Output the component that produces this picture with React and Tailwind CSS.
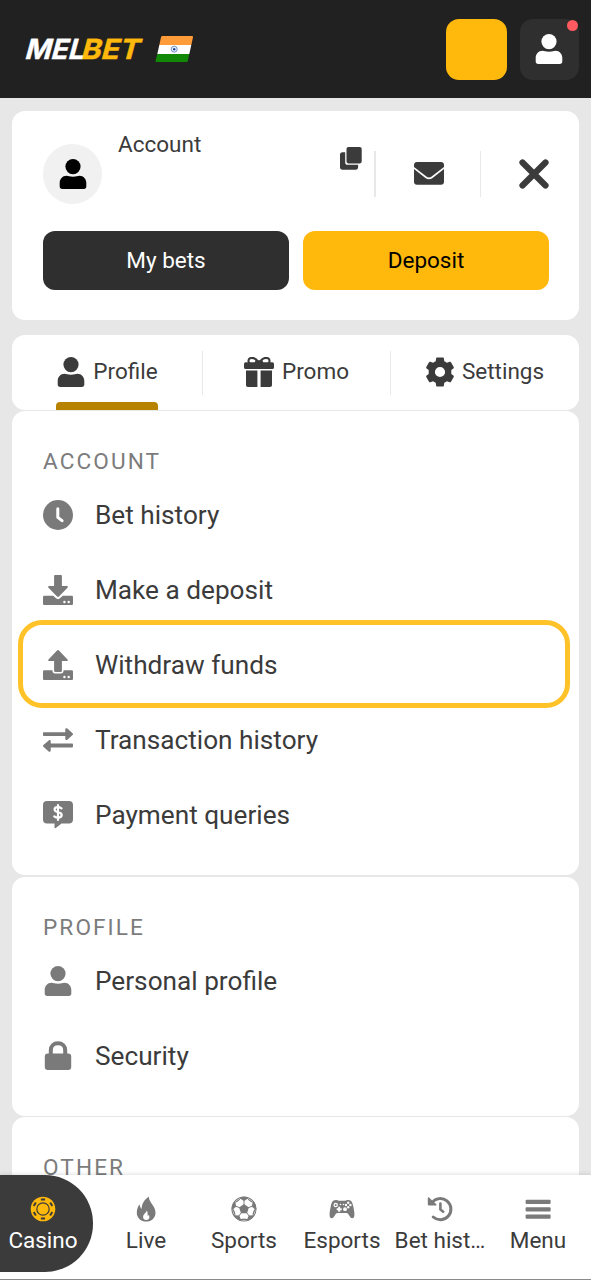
import React from "react";

function Svg({ w, h, className = "", children }) {
  return (
    <svg width={w} height={h} viewBox={`0 0 ${w} ${h}`} fill="currentColor" className={`shrink-0 ${className}`} aria-hidden="true">
      {children}
    </svg>
  );
}

const UserIcon = ({ className }) => (
  <Svg w={30} h={30} className={className}>
    <circle cx="15" cy="7.6" r="7.6" />
    <path d="M8.6 16.7c1.7 0 2.9 1 6.4 1s4.700-1 6.400-1c4.200 0 6.900 3.300 6.900 7.300v3.500c0 1.600-.9 2.500-2.500 2.500H4.200c-1.600 0-2.500-.9-2.500-2.500V24c0-4 2.700-7.300 6.900-7.300z" />
  </Svg>
);

const CopyIcon = () => (
  <Svg w={22} h={23}>
    <path d="M8.600 0h11c1.300 0 2.100.8 2.100 2.100v12.200c0 1.300-.8 2.100-2.100 2.100h-11c-1.300 0-2.100-.8-2.100-2.100V2.100C6.500.8 7.300 0 8.600 0z" />
    <path d="M5.200 5.200v10.300c0 1.400.9 2.300 2.300 2.300h10.600v2.400c0 1.600-.9 2.500-2.500 2.500H2.500c-1.600 0-2.500-.9-2.500-2.500V7.700c0-1.600.9-2.500 2.500-2.500z" />
  </Svg>
);

const MailIcon = () => (
  <Svg w={30} h={23}>
    <path d="M3 0h24c1.900 0 3 1.100 3 3v2L17.600 14.600c-1.700 1.300-3.500 1.300-5.200 0L0 5V3c0-1.900 1.100-3 3-3z" />
    <path d="M0 7l11.400 8.900c2.300 1.700 4.900 1.700 7.200 0L30 7v12.800c0 1.900-1.100 3-3 3H3c-1.900 0-3-1.100-3-3z" />
  </Svg>
);

const CloseIcon = () => (
  <Svg w={30} h={30}>
    <path d="M3.500 3.500l23 23M26.500 3.500l-23 23" stroke="currentColor" strokeWidth="6.200" strokeLinecap="round" />
  </Svg>
);

const GiftIcon = () => (
  <Svg w={30} h={30}>
    <path d="M15 5.800C12 1.500 8.500.2 6 1.300 4 2.200 4.200 4.500 5.300 6.300M15 5.800C18 1.500 21.500.2 24 1.300c2 .9 1.800 3.200.7 5" fill="none" stroke="currentColor" strokeWidth="2.100" />
    <path d="M11.500 3.200h7l1 3h-9z" />
    <rect x="0" y="5.200" width="30" height="6.800" rx="1.600" />
    <path d="M2 13.500h11.400V30H4c-1.300 0-2-.7-2-2zM16.600 13.500H28V28c0 1.300-.7 2-2 2h-9.400z" />
  </Svg>
);

const GearIcon = () => (
  <Svg w={28} h={30}>
    <path
      fillRule="evenodd"
      d="M11.200.5h5.600c.7 0 1 .4 1.100 1l.4 2.700 2.700 1.600 2.600-1c.6-.2 1.100 0 1.400.5l2.700 4.700c.3.600.2 1-.3 1.400l-2.100 1.700v3.800l2.100 1.700c.5.400.6.800.3 1.400L25 24.700c-.3.500-.8.700-1.400.5l-2.600-1-2.700 1.600-.4 2.700c-.1.600-.4 1-1.100 1h-5.600c-.7 0-1-.4-1.100-1l-.4-2.700L7 24.200l-2.600 1c-.6.2-1.100 0-1.400-.5L.3 20c-.3-.6-.2-1 .3-1.400l2.100-1.700v-3.800L.6 11.400C.1 11 0 10.600.3 10L3 5.300c.3-.5.8-.7 1.400-.5l2.600 1 2.700-1.600.4-2.700c.1-.6.4-1 1.100-1zM14 9.900a5.100 5.100 0 1 0 0 10.200 5.100 5.100 0 0 0 0-10.200z"
    />
  </Svg>
);

const ClockIcon = () => (
  <Svg w={30} h={30}>
    <circle cx="15" cy="15" r="15" />
    <path d="M14.800 8.800v8.500l4.200 3.400" fill="none" stroke="white" strokeWidth="3" strokeLinecap="round" strokeLinejoin="round" />
  </Svg>
);

const DepositIcon = () => (
  <Svg w={30} h={30}>
    <path d="M12.300 0h5.400c.8 0 1.200.4 1.200 1.200v9.900h5c1.100 0 1.400.8.600 1.600l-8.300 8.600c-.9.900-1.500.9-2.400 0l-8.300-8.600c-.8-.8-.5-1.600.6-1.600h5V1.200c0-.8.400-1.200 1.200-1.200z" />
    <path d="M1.500 20.800h8.700l2.800 2.500c1.300 1.100 2.700 1.100 4 0l2.800-2.500h8.700c1 0 1.500.5 1.500 1.500v6.200c0 1-.5 1.500-1.500 1.500h-27c-1 0-1.500-.5-1.500-1.500v-6.200c0-1 .5-1.500 1.500-1.500z" />
    <circle cx="21.400" cy="27" r="1.200" fill="white" />
    <circle cx="25.700" cy="27" r="1.200" fill="white" />
  </Svg>
);

const WithdrawIcon = () => (
  <Svg w={30} h={30}>
    <path d="M13.800.7c.9-.9 1.500-.9 2.400 0l8.300 8.700c.8.800.5 1.600-.6 1.600h-5v9.700c0 .8-.4 1.200-1.200 1.200h-5.400c-.8 0-1.200-.4-1.200-1.200V11h-5c-1.100 0-1.400-.8-.6-1.600z" />
    <path d="M1.500 20.300h8v.8c0 1.500 1 2.500 2.500 2.500h6c1.500 0 2.500-1 2.500-2.500v-.8h8c1 0 1.500.5 1.500 1.500v6.700c0 1-.5 1.500-1.500 1.500h-27c-1 0-1.500-.5-1.500-1.500v-6.700c0-1 .5-1.500 1.500-1.500z" />
    <circle cx="21.400" cy="27" r="1.200" fill="white" />
    <circle cx="25.700" cy="27" r="1.200" fill="white" />
  </Svg>
);

const SwapIcon = () => (
  <Svg w={30} h={24}>
    <path d="M.8 4.200h21.500V1.500c0-1.300 1.100-1.700 2-.9l5 4.400c.9.800.9 1.500 0 2.300l-5 4.400c-.9.800-2 .3-2-1V8H.8c-.5 0-.8-.3-.8-.8V5c0-.5.300-.8.800-.8z" />
    <path d="M29.200 15.600h-21.500v-2.300c0-1.300-1.100-1.700-2-.9l-5 4.400c-.9.800-.9 1.500 0 2.300l5 4.300c.9.800 2 .4 2-.9v-3.100h21.500c.5 0 .8-.3.800-.8v-2.200c0-.5-.3-.8-.8-.8z" />
  </Svg>
);

const QueryIcon = () => (
  <Svg w={30} h={28}>
    <path d="M4 0h22c2.600 0 4 1.400 4 4v14.500c0 2.600-1.400 4-4 4h-7.500l-5.700 4.400c-.8.600-1.300.3-1.300-.6v-3.800H4c-2.600 0-4-1.400-4-4V4c0-2.600 1.400-4 4-4z" />
    <path d="M18.500 7.300c-1.300-.9-2.300-1.200-3.700-1.200-1.900 0-3.200.9-3.200 2.300 0 3.700 7.100 1.700 7.100 5.700 0 1.600-1.400 2.500-3.500 2.500-1.600 0-2.800-.4-4-1.300M15 4v15" fill="none" stroke="white" strokeWidth="2.200" strokeLinecap="round" />
  </Svg>
);

const LockIcon = () => (
  <Svg w={30} h={30}>
    <path d="M7.800 14V9.200c0-4.200 3-7 7.200-7s7.200 2.800 7.200 7V14" fill="none" stroke="currentColor" strokeWidth="4" />
    <rect x="1.800" y="12.400" width="26.400" height="16.600" rx="3" />
  </Svg>
);

const ChipIcon = () => (
  <Svg w={26} h={26} className="text-[#ffb80c]">
    <circle cx="13" cy="13" r="12.300" />
    <circle cx="13" cy="13" r="6.200" fill="none" stroke="#3b3b3b" strokeWidth="1.200" />
    {[0, 60, 120, 180, 240, 300].map((a) => (
      <rect key={a} x="10.900" y="2.500" width="4.200" height="2" fill="#3b3b3b" transform={`rotate(${a} 13 13)`} />
    ))}
  </Svg>
);

const FlameIcon = () => (
  <Svg w={26} h={26}>
    <path d="M15.800.5C15.600 6.200 22.500 9.800 22.500 16.700c0 5.300-4.100 8.800-9.300 8.800S3.800 22 3.800 16.700c0-3.800 1.400-6.200 2.600-8.400.5 2.200 1.100 3.500 2.200 4.700C8.700 7.300 11.700 3.500 15.800.5z" />
    <path d="M13.800 14.500c-.3 2.200-3.700 3.600-3.700 6.600 0 1.800 1.300 2.900 3.200 2.900s3.100-1.100 3.100-2.900c0-1.100-.4-1.800-.7-2.400-.3.700-.6 1-1.100 1.300.2-2.300.1-3.600-.8-5.500z" fill="white" />
  </Svg>
);

const BallIcon = () => (
  <Svg w={26} h={26}>
    <clipPath id="ball">
      <circle cx="13" cy="13" r="12.300" />
    </clipPath>
    <circle cx="13" cy="13" r="12" fill="white" stroke="currentColor" strokeWidth="1.100" />
    <path d="M13 8l4.900 3.500-1.900 5.700h-6l-1.900-5.700z" />
    <g clipPath="url(#ball)">
      {[0, 72, 144, 216, 288].map((a) => (
        <g key={a} transform={`rotate(${a} 13 13)`}>
          <path d="M7.500 0h11l-1.500 2.500L13 4.900 9 2.500z" />
          <path d="M13 9V4M9.500 2.500L5.300 6M16.500 2.500L20.700 6" fill="none" stroke="currentColor" strokeWidth=".9" />
        </g>
      ))}
    </g>
  </Svg>
);

const PadIcon = () => (
  <Svg w={26} h={26}>
    <path d="M6.800 4c1.400 0 2 .7 3 .7h6.400c1 0 1.600-.7 3-.7 3.600 0 4.500 3.300 5.200 7 .8 4.200 2.300 11.300-1.200 11.300-2.500 0-3.200-5.300-5.700-5.300h-9c-2.500 0-3.200 5.300-5.700 5.300-3.500 0-2-7.100-1.200-11.300.7-3.700 1.600-7 5.200-7z" />
    <g fill="white">
      <circle cx="6.700" cy="9" r="2.200" />
      <path d="M9.200 10.700h2v1.500h1.500v2h-1.500v1.500h-2v-1.500H7.700v-2h1.500z" />
      <circle cx="16" cy="13.200" r="1.900" />
      <circle cx="19.200" cy="6.800" r="1.200" />
      <circle cx="19.200" cy="11.200" r="1.200" />
      <circle cx="17" cy="9" r="1.200" />
      <circle cx="21.400" cy="9" r="1.200" />
      <circle cx="11.500" cy="8.500" r=".8" />
      <circle cx="14.500" cy="8.500" r=".8" />
    </g>
    <circle cx="6.700" cy="9" r="1" />
  </Svg>
);

const HistoryIcon = () => (
  <Svg w={26} h={26}>
    <path d="M4.800 6.800A10.600 10.600 0 1 1 6.200 21" fill="none" stroke="currentColor" strokeWidth="3" strokeLinecap="round" />
    <path d="M.8 2c0-.7.700-1 1.200-.5l7.300 6.700c.6.500.3 1.200-.4 1.200H1.600c-.5 0-.8-.3-.8-.8z" />
    <path d="M13.400 7.500v6l2.800 2.200" fill="none" stroke="currentColor" strokeWidth="2.600" strokeLinecap="round" strokeLinejoin="round" />
  </Svg>
);

const MenuIcon = () => (
  <Svg w={26} h={26}>
    <rect x=".6" y="3.800" width="25" height="4.200" rx="1" />
    <rect x=".6" y="11.200" width="25" height="4.200" rx="1" />
    <rect x=".6" y="18.600" width="25" height="4.200" rx="1" />
  </Svg>
);

function Logo() {
  return (
    <svg width="130" height="48" viewBox="0 0 130 48" className="shrink-0 overflow-visible font-bold" fontFamily="Inter, sans-serif" aria-label="MELBET">
      <g transform="translate(-1 34.300) skewX(-15)" fontSize="27.700">
        <text x="56" y="0" fill="#ffb80c" stroke="#ffb80c" strokeWidth=".4" textLength="58.500" lengthAdjust="spacingAndGlyphs">BET</text>
        <text x="0" y="0" fill="#ffffff" stroke="#ffffff" strokeWidth=".4" textLength="59" lengthAdjust="spacingAndGlyphs">MEL</text>
      </g>
    </svg>
  );
}

function Flag() {
  return (
    <svg width="39" height="27" viewBox="0 0 39 27" className="shrink-0">
      <path d="M7.500 0H37q1.300 0 1 1.300L36.300 9H4.300L6 1.300Q6.300 0 7.500 0z" fill="#ff9b38" />
      <path d="M4.300 9h32l-2 9H2.300z" fill="white" />
      <path d="M2.300 18h32l-1.500 7q-.3 1-1.300 1H1.200Q.3 26 .5 25z" fill="#128807" />
      <circle cx="19.200" cy="13.200" r="3" fill="#edf2fa" stroke="#5277b8" strokeWidth=".8" />
      <circle cx="19.200" cy="13.200" r="1.200" fill="#164398" />
    </svg>
  );
}

const Divider = ({ className }) => <div className={`shrink-0 bg-[#e8e8e8] ${className}`} />;

function Row({ icon, label, highlighted }) {
  return (
    <li className="relative flex h-[75px] items-center">
      <span className="flex w-[30px] justify-center text-[#7a7a7a]">{icon}</span>
      <span className="ml-[22px] text-[26.200px] leading-[30px] text-[#3b3b3b]">{label}</span>
      {highlighted && (
        <span className="pointer-events-none absolute -top-[7px] -right-[22px] -bottom-[6px] -left-[25px] rounded-[24px] border-[5px] border-[#ffc329]" />
      )}
    </li>
  );
}

function Section({ title, className = "", children }) {
  return (
    <section className={`shrink-0 rounded-[13px] bg-white px-[31px] pt-[37px] ${className}`}>
      <h2 className="text-[22.600px] leading-[28px] tracking-[2.100px] text-[#7c7c7c]">{title}</h2>
      <ul className="mt-px">{children}</ul>
    </section>
  );
}

function NavItem({ icon, label, className = "w-[98px]" }) {
  return (
    <a className={`flex shrink-0 flex-col items-center pt-[21px] text-[#7a7a7a] ${className}`}>
      {icon}
      <span className="mt-[4px] text-[22.500px] leading-[28px] whitespace-nowrap text-[#3b3b3b]">{label}</span>
    </a>
  );
}

export default function App() {
  return (
    <div className="flex h-[1280px] w-[591px] flex-col overflow-hidden bg-[#e7e7e7] font-['Roboto',sans-serif] text-[#3b3b3b]">
      <header className="flex h-[98px] shrink-0 items-center bg-[#212121] pr-[12px] pl-[25px]">
        <Logo />
        <Flag />
        <button className="ml-auto h-[61px] w-[61px] rounded-[13px] bg-[#ffb80c]" aria-label="Balance" />
        <button className="relative ml-[13px] flex h-[61px] w-[59px] items-center justify-center rounded-[13px] bg-[#2f2f2f] pr-[2px] text-white">
          <UserIcon />
          <span className="absolute top-[1px] right-[1px] size-[11px] rounded-full bg-[#ff5a5f]" />
        </button>
      </header>

      <main className="flex min-h-0 flex-1 flex-col overflow-hidden px-[12px] pt-[13px]">
        <section className="h-[209px] shrink-0 rounded-[13px] bg-white pt-[18px] pr-[30px] pl-[31px]">
          <div className="flex h-[102px]">
            <div className="mt-[15px] flex h-[60px] w-[59px] items-center justify-center rounded-full bg-[#f1f1f1] text-black">
              <UserIcon />
            </div>
            <span className="mt-px ml-[16px] text-[22.500px] leading-[28px]">Account</span>
            <div className="mt-[18px] ml-auto">
              <CopyIcon />
            </div>
            <Divider className="mt-[22px] ml-[12px] h-[46px] w-[2px]" />
            <div className="mt-[33px] ml-[38px]">
              <MailIcon />
            </div>
            <Divider className="mt-[22px] ml-[36px] h-[46px] w-px" />
            <div className="mt-[30px] ml-[38px]">
              <CloseIcon />
            </div>
          </div>
          <div className="flex gap-[14px] text-[22.500px] leading-[28px]">
            <button className="h-[59px] flex-1 rounded-[12px] bg-[#2f2f2f] pb-px text-white">My bets</button>
            <button className="h-[59px] flex-1 rounded-[12px] bg-[#ffb80c] pb-px text-black">Deposit</button>
          </div>
        </section>

        <nav className="mt-[15px] flex h-[75px] shrink-0 items-center rounded-[13px] bg-white text-[22.500px] leading-[28px]">
          <div className="flex h-full w-[190px] justify-center">
            <a className="relative flex items-center gap-[7px] pb-[2px]">
              <UserIcon />
              <span className="pb-[2px]">Profile</span>
              <span className="absolute inset-x-0 bottom-0 h-[8px] rounded-t-[4px] bg-[#b68200]" />
            </a>
          </div>
          <Divider className="h-[44px] w-px" />
          <a className="flex w-[187px] items-center justify-center gap-[8px] pb-[2px]">
            <GiftIcon />
            <span className="pb-[2px]">Promo</span>
          </a>
          <Divider className="h-[44px] w-px" />
          <a className="flex flex-1 items-center justify-center gap-[8px] pb-[2px]">
            <GearIcon />
            <span className="pb-[2px]">Settings</span>
          </a>
        </nav>

        <Section title="ACCOUNT" className="mt-[1px] h-[464px]">
          <Row icon={<ClockIcon />} label="Bet history" />
          <Row icon={<DepositIcon />} label="Make a deposit" />
          <Row icon={<WithdrawIcon />} label="Withdraw funds" highlighted />
          <Row icon={<SwapIcon />} label="Transaction history" />
          <Row icon={<QueryIcon />} label="Payment queries" />
        </Section>
        <Section title="PROFILE" className="mt-[2px] h-[239px]">
          <Row icon={<UserIcon />} label="Personal profile" />
          <Row icon={<LockIcon />} label="Security" />
        </Section>
        <Section title="OTHER" className="mt-[1px] h-[239px]" />
      </main>

      <footer className="relative flex h-[105px] shrink-0 border-b border-[#8a8a8a] bg-white shadow-[0_-1px_4px_rgba(0,0,0,0.12)]">
        <a className="flex h-[97px] w-[93px] shrink-0 flex-col items-center rounded-r-[48px] bg-[#3b3b3b] pt-[21px] pr-[7px]">
          <ChipIcon />
          <span className="mt-[4px] text-[22.500px] leading-[28px] text-white">Casino</span>
        </a>
        <NavItem icon={<FlameIcon />} label="Live" className="ml-[4px] w-[98px]" />
        <NavItem icon={<BallIcon />} label="Sports" />
        <NavItem icon={<PadIcon />} label="Esports" />
        <NavItem icon={<HistoryIcon />} label="Bet hist…" />
        <NavItem icon={<MenuIcon />} label="Menu" />
      </footer>
    </div>
  );
}
